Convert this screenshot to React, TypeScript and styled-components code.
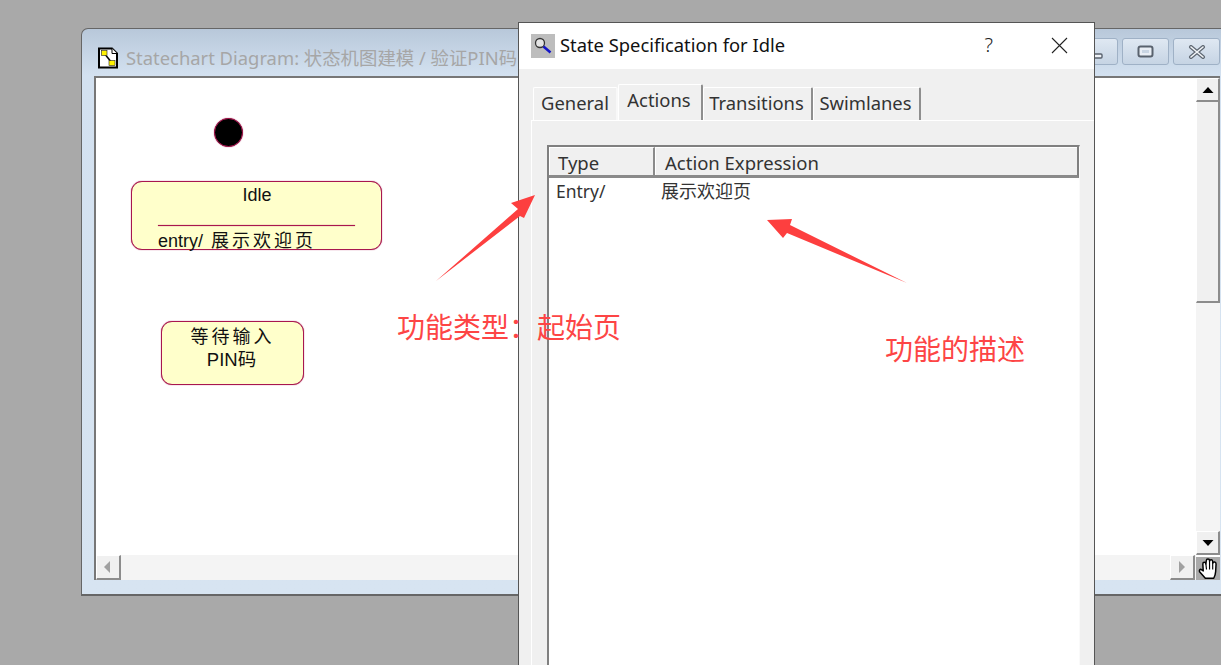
import React from "react";
import styled, { createGlobalStyle } from "styled-components";

const UI = `"Noto Sans", "Noto Sans CJK SC", sans-serif`;
const CJK = `"Noto Sans CJK SC", "Noto Sans", sans-serif`;
const DIAGRAM = `"Liberation Sans", "Noto Sans CJK SC", sans-serif`;
const STROKE = "#a8174f";

const Global = createGlobalStyle`
  html, body { margin: 0; padding: 0; height: 665px; overflow: hidden; background: #a9a9a9; }
  #root { width: 1221px; height: 665px; }
`;

const Desktop = styled.div`
  position: relative;
  width: 1221px;
  height: 665px;
  overflow: hidden;
  background: #a9a9a9;
`;

/* ---------- MDI child window ---------- */
const Win = styled.section`
  position: absolute;
  left: 81px;
  top: 28px;
  width: 1150px;
  height: 568px;
  box-sizing: border-box;
  display: flex;
  flex-direction: column;
  border: 1px solid #666;
  border-bottom-width: 2px;
  border-radius: 7px 7px 0 0;
  background: linear-gradient(#b8c8da 0, #d3e1f0 46px, #d7e4f1 100%);
`;

const WinTitle = styled.header`
  height: 47px;
  flex: none;
  display: flex;
  align-items: center;
  padding: 10px 10px 0 15px;
  box-sizing: border-box;
  gap: 7px;
`;

const WinTitleText = styled.span`
  font: 18.4px/24px ${UI};
  color: #a6a6a6;
  white-space: nowrap;
  flex: 1;
`;

const WinButtons = styled.div`
  display: flex;
  gap: 4px;
  margin-top: -12px;
`;

const WinButton = styled.div`
  width: 47px;
  height: 27px;
  box-sizing: border-box;
  border: 1px solid #9fb1c6;
  border-radius: 3px;
  background: linear-gradient(#dfe8f2, #c6d4e4);
  display: flex;
  align-items: center;
  justify-content: center;
`;

const MinGlyph = styled.svg`
  margin-top: 8px;
`;

const Client = styled.div`
  margin: 0 0 14px 12px;
  flex: 1;
  min-height: 0;
  width: 1126px;
  box-sizing: border-box;
  border-left: 2px solid #777;
  border-top: 2px solid #777;
  display: grid;
  grid-template-columns: 1fr 24px;
  grid-template-rows: 1fr 25px;
  background: #fff;
`;

const Canvas = styled.div`
  position: relative;
  background: #fff;
`;

const VScroll = styled.div`
  display: flex;
  flex-direction: column;
  background: #f4f4f4;
  background-image: radial-gradient(#e6e6e6 0.5px, transparent 0.6px);
  background-size: 2px 2px;
`;

const ScrollBtn = styled.div<{ $size?: number }>`
  width: ${(p) => p.$size ?? 24}px;
  height: ${(p) => p.$size ?? 24}px;
  flex: none;
  box-sizing: border-box;
  background: #f0f0f0;
  border-top: 1px solid #fff;
  border-left: 1px solid #fff;
  border-right: 2px solid #8c8c8c;
  border-bottom: 2px solid #8c8c8c;
  display: flex;
  align-items: center;
  justify-content: center;
`;

const Thumb = styled.div`
  height: 201px;
  flex: none;
  box-sizing: border-box;
  background: #f0f0f0;
  border-left: 1px solid #fff;
  border-right: 2px solid #8c8c8c;
  border-bottom: 2px solid #8c8c8c;
`;

const Track = styled.div`
  flex: 1;
`;

const HScroll = styled.div`
  display: flex;
  justify-content: space-between;
  background: #f4f4f4;
  background-image: radial-gradient(#e6e6e6 0.5px, transparent 0.6px);
  background-size: 2px 2px;
  padding-right: 1px;
`;

const Corner = styled.div`
  background: #a9a9a9;
  display: flex;
  align-items: center;
  justify-content: center;
  border-top: 2px solid #fff;
  box-sizing: border-box;
`;

/* ---------- statechart nodes ---------- */
const InitialState = styled.div`
  position: absolute;
  left: 118px;
  top: 40px;
  width: 29px;
  height: 29px;
  box-sizing: border-box;
  border-radius: 50%;
  background: #000;
  border: 1px solid ${STROKE};
  box-shadow: 0 0 1px ${STROKE};
`;

const StateNode = styled.div<{ $x: number; $y: number; $w: number; $h: number }>`
  position: absolute;
  left: ${(p) => p.$x}px;
  top: ${(p) => p.$y}px;
  width: ${(p) => p.$w}px;
  height: ${(p) => p.$h}px;
  box-sizing: border-box;
  border: 1px solid ${STROKE};
  box-shadow: 0 0 1px ${STROKE};
  border-radius: 11px;
  background: #ffffcb;
  font: 18px/23px ${DIAGRAM};
  color: #111;
`;

const StateName = styled.div`
  text-align: center;
  height: 23px;
  margin-top: 2px;
  padding-left: 1px;
`;

const StateRule = styled.div`
  height: 1px;
  margin: 18px 26px 0;
  background: ${STROKE};
  box-shadow: 0 0 1px ${STROKE};
`;

const StateAction = styled.div`
  padding-left: 26px;
  white-space: nowrap;
  margin-top: 4px;
`;

const ActionCjk = styled.span`
  letter-spacing: 3px;
  margin-left: 3px;
`;

const StateLabel = styled.div<{ $spaced?: boolean }>`
  text-align: center;
  letter-spacing: ${(p) => (p.$spaced ? 3 : 0)}px;
  margin-top: ${(p) => (p.$spaced ? 4 : -1)}px;
  padding-right: ${(p) => (p.$spaced ? 0 : 2)}px;
  font-size: ${(p) => (p.$spaced ? 18 : 18.5)}px;
`;

/* ---------- specification dialog ---------- */
const Dialog = styled.section`
  position: absolute;
  left: 518px;
  top: 22px;
  width: 577px;
  height: 700px;
  box-sizing: border-box;
  border: 1px solid #555;
  background: #f0f0f0;
  display: flex;
  flex-direction: column;
`;

const DialogTitle = styled.header`
  height: 46px;
  flex: none;
  background: #fff;
  display: flex;
  align-items: center;
  padding: 0 0 2px 12px;
  box-sizing: border-box;
  font: 18.35px/24px ${UI};
  color: #111;
`;

const DialogIcon = styled.div`
  width: 24px;
  height: 24px;
  margin-top: 2px;
  background: #bdbdbd;
  margin-right: 5px;
  display: flex;
  align-items: center;
  justify-content: center;
`;

const DialogName = styled.span`
  flex: 1;
`;

const HelpMark = styled.span`
  font: 300 20px/24px ${UI};
  color: #222;
  margin-right: 58px;
`;

const CloseMark = styled.svg`
  width: 17px;
  height: 17px;
  margin-right: 26px;
`;

const TabRow = styled.nav`
  height: 51px;
  flex: none;
  padding: 0 0 0 14px;
  box-sizing: border-box;
  display: flex;
  align-items: flex-end;
`;

const Tab = styled.div<{ $active?: boolean; $w: number; $flat?: boolean }>`
  width: ${(p) => p.$w}px;
  height: ${(p) => (p.$active ? 37 : 33)}px;
  box-sizing: border-box;
  border-top: 1px solid #fff;
  border-left: 1px solid #fff;
  border-right: 2px solid ${(p) => (p.$flat ? "#f8f8f8" : "#8e8e8e")};
  border-radius: 2px 2px 0 0;
  font: 18.4px/${(p) => (p.$active ? 29 : 30)}px ${UI};
  color: #333;
  text-align: center;
  padding-right: ${(p) => (p.$flat ? 0 : 2)}px;
  margin-bottom: ${(p) => (p.$active ? -1 : 0)}px;
  background: #f0f0f0;
`;

const TabPanel = styled.div`
  flex: 1;
  margin-left: 12px;
  border-top: 1px solid #fff;
  border-left: 1px solid #fff;
  padding: 24px 14px 0 15px;
  box-sizing: border-box;
`;

const ListView = styled.div`
  height: 600px;
  box-sizing: border-box;
  border: 2px solid #808080;
  border-bottom: none;
  border-right: 1px solid #fafafa;
  background: #fff;
  font: 18.5px/24px ${UI};
  color: #333;
`;

const ListHead = styled.div`
  display: grid;
  grid-template-columns: 106px 1fr;
  height: 31px;
  box-sizing: border-box;
  background: #f0f0f0;
  border-bottom: 3px solid #8a8a8a;
  border-right: 2px solid #808080;
`;

const HeadCell = styled.div`
  padding: 3px 0 0 8px;
  border-right: 2px solid #8a8a8a;
  border-left: 1px solid #fff;
  border-top: 1px solid #fff;
  &:last-child {
    border-right: none;
    padding-left: 9px;
  }
`;

const ListRow = styled.div`
  display: grid;
  grid-template-columns: 105px 1fr;
  padding: 0 0 0 7px;
`;

const RowText = styled.span`
  font-size: 17.5px;
  padding-top: 1px;
`;

const RowCjk = styled.span`
  font: 18px/24px ${CJK};
  color: #333;
`;

/* ---------- red annotations ---------- */
const Overlay = styled.svg`
  position: absolute;
  left: 0;
  top: 0;
  width: 1221px;
  height: 665px;
  pointer-events: none;
`;

const Note = styled.div<{ $x: number; $y: number }>`
  position: absolute;
  left: ${(p) => p.$x}px;
  top: ${(p) => p.$y}px;
  font: 400 28px/40px ${CJK};
  color: #fd4545;
  white-space: nowrap;
`;

const Arrow = ({ dir, color = "#000" }: { dir: "up" | "down" | "left" | "right"; color?: string }) => {
  const pts = {
    up: "1.5,8 12.5,8 7,2",
    down: "1.5,2 12.5,2 7,8",
    left: "9,1 9,13 3,7",
    right: "4,1 4,13 10,7",
  }[dir];
  const vertical = dir === "up" || dir === "down";
  return (
    <svg width="14" height={vertical ? 10 : 14} viewBox={vertical ? "0 0 14 10" : "0 0 14 14"}>
      <polygon points={pts} fill={color} />
    </svg>
  );
};

export default function App() {
  return (
    <Desktop>
      <Global />
      <Win>
        <WinTitle>
          <svg width="22" height="22" viewBox="0 0 22 22">
            <path d="M2 1.5h13l5 5v14H2z" fill="#fff" stroke="#000" strokeWidth="2" />
            <path d="M15 1.5v5h5" fill="#fff" stroke="#000" strokeWidth="1" />
            <path d="M7 6l8 10" stroke="#000" strokeWidth="1.5" />
            <rect x="4.5" y="3.5" width="5.5" height="5" fill="#fff200" stroke="#222" strokeWidth="0.6" />
            <rect x="12" y="13.5" width="6" height="5" fill="#fff200" stroke="#222" strokeWidth="0.6" />
          </svg>
          <WinTitleText>Statechart Diagram: 状态机图建模 / 验证PIN码</WinTitleText>
          <WinButtons>
            <WinButton>
              <MinGlyph width="17" height="6" viewBox="0 0 17 6">
                <rect x="1" y="1" width="15" height="4" rx="1" fill="#eef2f7" stroke="#59626e" strokeWidth="1.4" />
              </MinGlyph>
            </WinButton>
            <WinButton>
              <svg width="17" height="13" viewBox="0 0 17 13">
                <rect x="1.5" y="1.5" width="14" height="10" rx="2" fill="#e9eef5" stroke="#59626e" strokeWidth="2" />
                <rect x="5" y="5" width="7" height="3" fill="#c9d5e3" />
              </svg>
            </WinButton>
            <WinButton>
              <svg width="18" height="14" viewBox="0 0 18 14">
                <path d="M3 2l12 10M15 2L3 12" stroke="#5f6873" strokeWidth="4" strokeLinecap="round" />
                <path d="M3 2l12 10M15 2L3 12" stroke="#f2f5f8" strokeWidth="1.6" strokeLinecap="round" />
              </svg>
            </WinButton>
          </WinButtons>
        </WinTitle>
        <Client>
          <Canvas>
            <InitialState />
            <StateNode $x={35} $y={103} $w={251} $h={69}>
              <StateName>Idle</StateName>
              <StateRule />
              <StateAction>
                entry/ <ActionCjk>展示欢迎页</ActionCjk>
              </StateAction>
            </StateNode>
            <StateNode $x={65} $y={243} $w={143} $h={64}>
              <StateLabel $spaced>等待输入</StateLabel>
              <StateLabel>PIN码</StateLabel>
            </StateNode>
          </Canvas>
          <VScroll>
            <ScrollBtn>
              <Arrow dir="up" />
            </ScrollBtn>
            <Thumb />
            <Track />
            <ScrollBtn>
              <Arrow dir="down" />
            </ScrollBtn>
          </VScroll>
          <HScroll>
            <ScrollBtn $size={25}>
              <Arrow dir="left" color="#a0a0a0" />
            </ScrollBtn>
            <ScrollBtn $size={25}>
              <Arrow dir="right" color="#a0a0a0" />
            </ScrollBtn>
          </HScroll>
          <Corner>
            <svg width="21" height="21" viewBox="0 0 20 20">
              <path
                d="M7 19.3 L1.5 13 Q0.8 11 2.8 10.8 L5 12.3 L4.6 5.6 Q4.6 4 6 4 Q7.4 4 7.5 5.6 L7.9 2.6 Q8 1 9.5 1 Q11 1 11 2.6 V3 Q11.2 1.6 12.6 1.7 Q14 1.8 14 3.4 L14 5 Q14.3 3.7 15.7 3.9 Q17.2 4.1 17.2 5.6 L16.8 13 Q16.6 16.4 15 19.3 Z"
                fill="#fff"
                stroke="#000"
                strokeWidth="1.4"
                strokeLinejoin="round"
              />
              <path d="M7.5 5.6l.6 5.4M11 3v8M14 5v6" stroke="#000" strokeWidth="1.1" fill="none" />
            </svg>
          </Corner>
        </Client>
      </Win>

      <Dialog>
        <DialogTitle>
          <DialogIcon>
            <svg width="22" height="22" viewBox="0 0 22 22">
              <circle cx="8" cy="8" r="4.5" fill="#e4e4e4" stroke="#333" strokeWidth="1.3" />
              <path d="M11.5 11.5l7 6" stroke="#1414c8" strokeWidth="2.5" />
            </svg>
          </DialogIcon>
          <DialogName>State Specification for Idle</DialogName>
          <HelpMark>?</HelpMark>
          <CloseMark viewBox="0 0 17 17">
            <path d="M1 1l15 15M16 1L1 16" stroke="#222" strokeWidth="1.1" fill="none" />
          </CloseMark>
        </DialogTitle>
        <TabRow>
          <Tab $w={85} $flat>General</Tab>
          <Tab $active $w={85}>Actions</Tab>
          <Tab $w={110}>Transitions</Tab>
          <Tab $w={108}>Swimlanes</Tab>
        </TabRow>
        <TabPanel>
          <ListView>
            <ListHead>
              <HeadCell>Type</HeadCell>
              <HeadCell>Action Expression</HeadCell>
            </ListHead>
            <ListRow>
              <RowText>Entry/</RowText>
              <RowCjk>展示欢迎页</RowCjk>
            </ListRow>
          </ListView>
        </TabPanel>
      </Dialog>

      <Overlay viewBox="0 0 1221 665">
        <polygon points="535,195 511,203 518,209 436,281 520,216 524,218" fill="#fd3f3f" />
        <polygon points="767,220 792,219 790,225 907,283 787,233 783,238" fill="#fd3f3f" />
      </Overlay>
      <Note $x={397} $y={306}>功能类型：起始页</Note>
      <Note $x={885} $y={328}>功能的描述</Note>
    </Desktop>
  );
}
